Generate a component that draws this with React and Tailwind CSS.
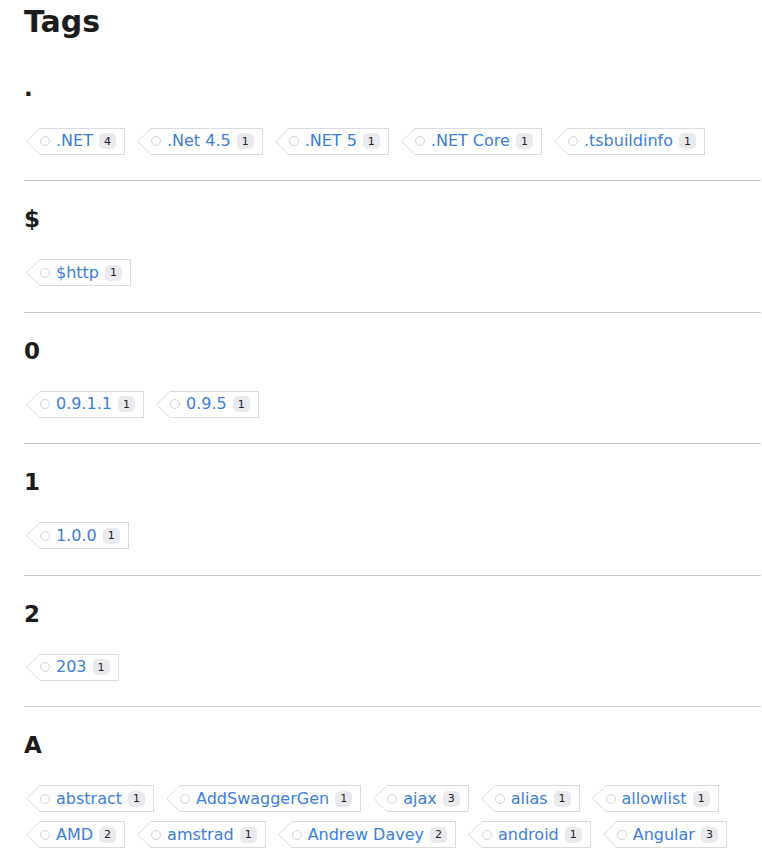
const sections = [
  {
    letter: ".",
    tags: [
      [".NET", 4],
      [".Net 4.5", 1],
      [".NET 5", 1],
      [".NET Core", 1],
      [".tsbuildinfo", 1],
    ],
  },
  { letter: "$", tags: [["$http", 1]] },
  {
    letter: "0",
    tags: [
      ["0.9.1.1", 1],
      ["0.9.5", 1],
    ],
  },
  { letter: "1", tags: [["1.0.0", 1]] },
  { letter: "2", tags: [["203", 1]] },
  {
    letter: "A",
    tags: [
      ["abstract", 1],
      ["AddSwaggerGen", 1],
      ["ajax", 3],
      ["alias", 1],
      ["allowlist", 1],
      ["AMD", 2],
      ["amstrad", 1],
      ["Andrew Davey", 2],
      ["android", 1],
      ["Angular", 3],
    ],
  },
];

const Tag = ({ name, count }) => (
  <a href="#" className="flex h-[27px] items-stretch">
    <svg width="16" height="27" viewBox="0 0 16 27" className="shrink-0">
      <path d="M16 0.5 L2.5 13.5 L16 26.5" fill="white" stroke="#d9dbde" />
    </svg>
    <span className="flex items-center border border-l-0 border-[#d9dbde] pr-[8px]">
      <span className="h-[10px] w-[10px] rounded-full border border-[#d3d6da]" />
      <span className="ml-[6px] text-[16px] leading-none text-[#3b7ddd]">{name}</span>
      <span className="ml-[6px] flex h-[16px] items-center rounded-[5px] bg-[#e9eaed] px-[5px] text-[11px] leading-none text-[#222]">
        {count}
      </span>
    </span>
  </a>
);

export default function App() {
  return (
    <div className="ml-6 mr-px font-['DejaVu_Sans',sans-serif] text-[#1c1c1c]">
      <h1 className="text-[30px] font-bold leading-[44px]">Tags</h1>
      {sections.map((section, i) => (
        <section key={section.letter} className={`${i ? "border-t border-[#c8c9cb] pt-[22px]" : "pt-[27.5px]"} pb-[25.5px]`}>
          <h2 className="text-[23px] font-bold leading-[32px]">{section.letter}</h2>
          <div className="mt-[24px] flex flex-wrap gap-x-[10px] gap-y-[9px]">
            {section.tags.map(([name, count]) => (
              <Tag key={name} name={name} count={count} />
            ))}
          </div>
        </section>
      ))}
    </div>
  );
}
